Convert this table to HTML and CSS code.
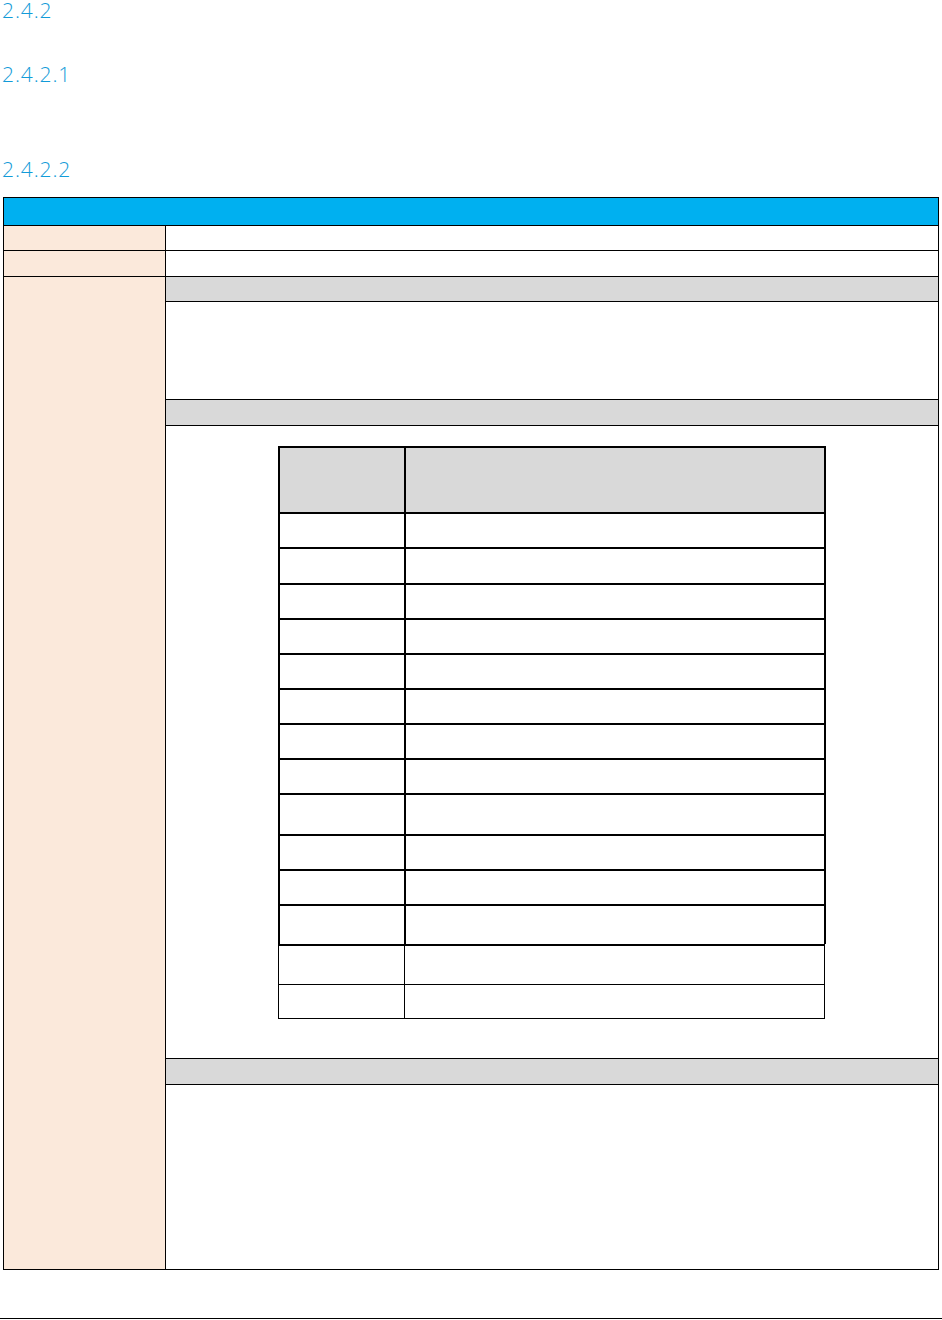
FILE: index.html
```html
<!DOCTYPE html>
<html lang="en">
<head>
    <meta charset="UTF-8">
    <meta name="viewport" content="width=device-width, initial-scale=1.0">
    <title>2.4.2</title>
    <link rel="stylesheet" href="styles.css">
</head>
<body>
    <div class="page">
        <h2 class="heading heading-l3">2.4.2</h2>
        <h3 class="heading heading-l4">2.4.2.1</h3>
        <h4 class="heading heading-l5">2.4.2.2</h4>

        <!-- Spec sheet -->
        <div class="spec">
            <div class="spec-head"></div>
            <div class="spec-row spec-row-short">
                <div class="spec-key"></div>
                <div class="spec-val"></div>
            </div>
            <div class="spec-row spec-row-mid">
                <div class="spec-key"></div>
                <div class="spec-val"></div>
            </div>
            <div class="spec-row spec-row-main">
                <div class="spec-key"></div>
                <div class="spec-val spec-sections">
                    <div class="section-bar section-bar-first"></div>
                    <div class="section-body section-body-short"></div>
                    <div class="section-bar"></div>
                    <div class="section-body section-body-table">
                        <div class="grid">
                            <div class="grid-row grid-row-head"><div class="grid-key"></div><div class="grid-val"></div></div>
                            <div class="grid-row"><div class="grid-key"></div><div class="grid-val"></div></div>
                            <div class="grid-row grid-row-36"><div class="grid-key"></div><div class="grid-val"></div></div>
                            <div class="grid-row"><div class="grid-key"></div><div class="grid-val"></div></div>
                            <div class="grid-row"><div class="grid-key"></div><div class="grid-val"></div></div>
                            <div class="grid-row"><div class="grid-key"></div><div class="grid-val"></div></div>
                            <div class="grid-row"><div class="grid-key"></div><div class="grid-val"></div></div>
                            <div class="grid-row"><div class="grid-key"></div><div class="grid-val"></div></div>
                            <div class="grid-row"><div class="grid-key"></div><div class="grid-val"></div></div>
                            <div class="grid-row grid-row-41"><div class="grid-key"></div><div class="grid-val"></div></div>
                            <div class="grid-row"><div class="grid-key"></div><div class="grid-val"></div></div>
                            <div class="grid-row"><div class="grid-key"></div><div class="grid-val"></div></div>
                            <div class="grid-row grid-row-40"><div class="grid-key"></div><div class="grid-val"></div></div>
                            <div class="grid-row thin thin-first"><div class="grid-key"></div><div class="grid-val"></div></div>
                            <div class="grid-row thin thin-last"><div class="grid-key"></div><div class="grid-val"></div></div>
                        </div>
                    </div>
                    <div class="section-bar"></div>
                    <div class="section-body section-body-fill"></div>
                </div>
            </div>
        </div>

        <div class="footer-rule"></div>
    </div>
</body>
</html>
```

FILE: styles.css
```css
* {
    box-sizing: border-box;
}

body {
    margin: 0;
    padding: 0;
    background: #fff;
    font-family: "Open Sans", "Lato", sans-serif;
    color: #000;
}

.page {
    width: 942px;
}

/* Headings */
.heading {
    margin: 0;
    padding-left: 2px;
    font-size: 21px;
    line-height: 20px;
    font-weight: 300;
    letter-spacing: 0.9px;
    color: #129bd8;
}

.heading-l4 {
    margin-top: 44px;
}

.heading-l5 {
    margin-top: 75px;
}

/* Outer spec table */
.spec {
    margin: 18px 0 0 3px;
    width: 936px;
    border: 1px solid #000;
}

.spec-head {
    height: 27px;
    background: #00b0f0;
}

.spec-row {
    display: flex;
    border-top: 1px solid #000;
}

.spec-row-short {
    height: 25px;
}

.spec-row-mid {
    height: 26px;
}

.spec-row-main {
    height: 993px;
}

.spec-key {
    width: 162px;
    background: #fbe9db;
    border-right: 1px solid #000;
}

.spec-val {
    flex: 1;
}

.spec-sections {
    display: flex;
    flex-direction: column;
}

.section-bar {
    height: 27px;
    background: #d9d9d9;
    border-top: 1px solid #000;
    border-bottom: 1px solid #000;
}

.section-bar-first {
    height: 25px;
    border-top: none;
}

.section-body-short {
    height: 97px;
}

.section-body-table {
    height: 632px;
    padding-top: 20px;
}

.section-body-fill {
    flex: 1;
}

/* Inner grid */
.grid {
    width: 548px;
    margin: 0 auto;
}

.grid-row {
    display: flex;
    height: 35px;
    border: 2px solid #000;
    border-bottom: none;
}

.grid-row-head {
    height: 66px;
    background: #d9d9d9;
}

.grid-row-36 {
    height: 36px;
}

.grid-row-41 {
    height: 41px;
}

.grid-row-40 {
    height: 40px;
}

.grid-key {
    width: 126px;
    border-right: 2px solid #000;
}

.grid-val {
    flex: 1;
}

.grid-row.thin {
    border-width: 1px;
    border-right-width: 1px;
    margin-right: 1px;
}

.grid-row.thin .grid-key {
    border-right-width: 1px;
}

.thin-first {
    height: 40px;
    border-top-width: 2px !important;
}

.thin-last {
    height: 35px;
    border-bottom: 1px solid #000;
}

.footer-rule {
    margin-top: 48px;
    border-top: 1px solid #000;
}
```
